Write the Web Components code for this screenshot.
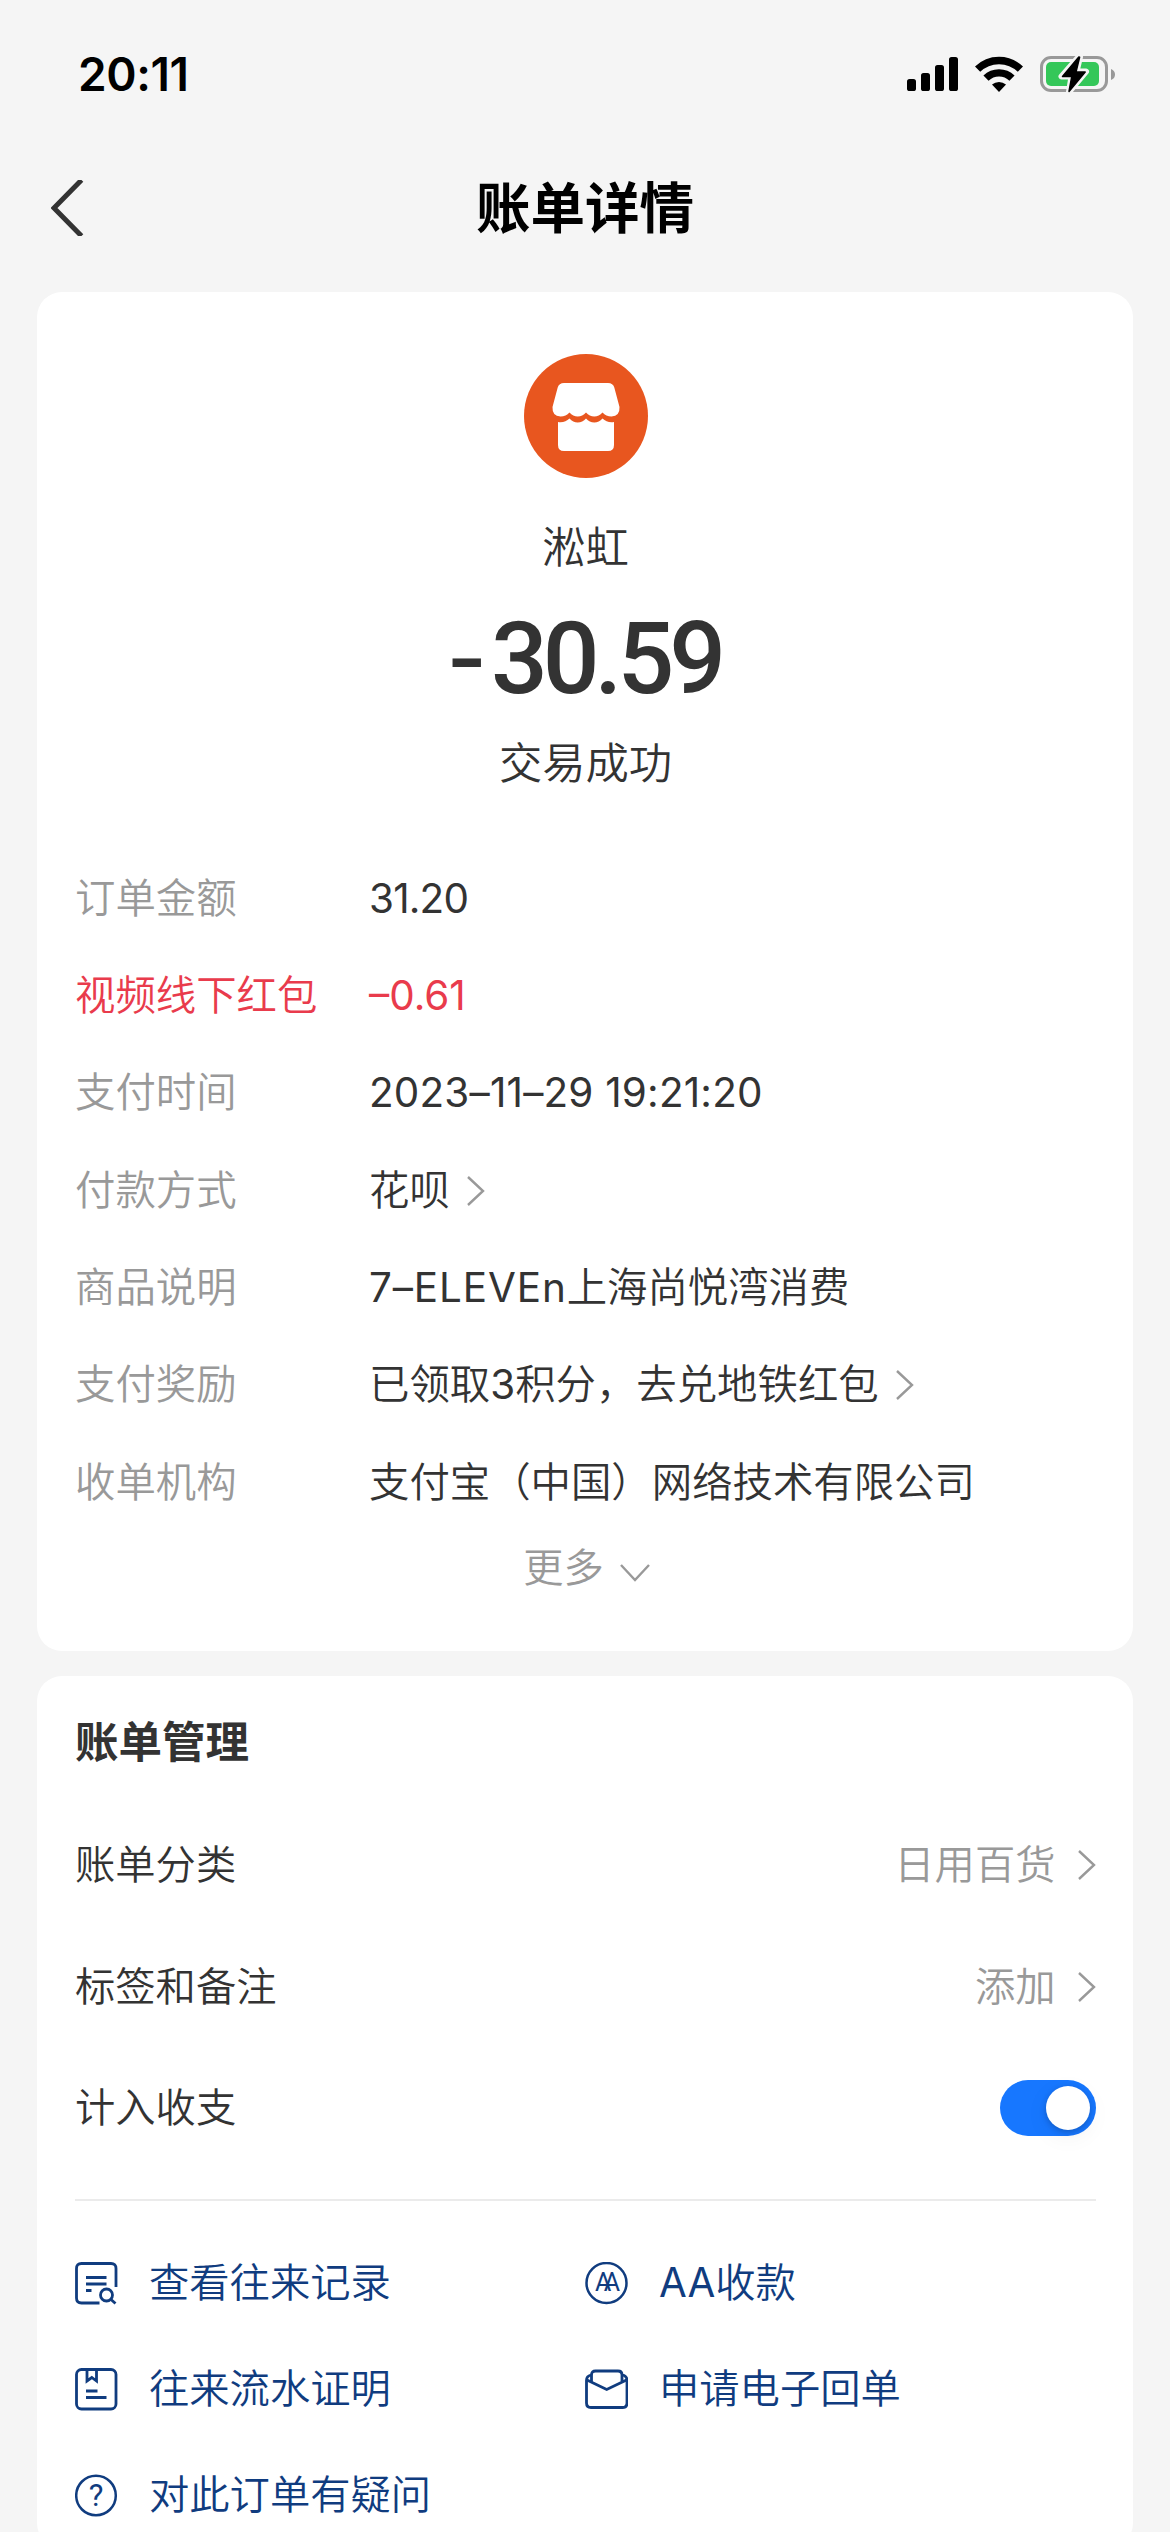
<!DOCTYPE html>
<html lang="zh-CN">
<head>
<meta charset="UTF-8">
<meta name="viewport" content="width=device-width, initial-scale=1.0">
<title>账单详情</title>
<style>
    html, body {
        margin: 0;
        height: 2532px;
        overflow: hidden;
    }

    body {
        background: #f5f5f5;
        color: #333;
        font-family: Inter, "Noto Sans CJK SC", sans-serif;
        font-size: 40.3px;
        font-weight: 350;
        line-height: 60px;
    }
</style>
</head>
<body>
    <bill-page></bill-page>

<script>
const define = (name, html) => {
    customElements.define(name, class extends HTMLElement {
        constructor() {
            super();
            this.attachShadow({ mode: 'open' });
            this.shadowRoot.innerHTML = html;
        }
    });
};

define('status-bar', `
    <style>
        :host {
            display: flex;
            align-items: center;
            justify-content: space-between;
            height: 148px;
            padding: 0 55px 0 78px;
            color: #000;
        }
        time {
            font-size: 46px;
            font-weight: 600;
            letter-spacing: -0.4px;
        }
        .icons {
            display: flex;
            align-items: center;
            gap: 17px;
        }
        svg { display: block; }
    </style>
    <time>20:11</time>
    <div class="icons">
        <svg width="51" height="36" viewBox="0 0 51 36">
            <rect x="0" y="23" width="9" height="12" rx="2.6"/>
            <rect x="14" y="17" width="9" height="18" rx="2.6"/>
            <rect x="28" y="9" width="9" height="26" rx="2.6"/>
            <rect x="42" y="1" width="9" height="34" rx="2.6"/>
        </svg>
        <svg width="48" height="36" viewBox="0 0 48 36">
            <g fill="none" stroke="#000" stroke-width="7.4">
                <path d="M2.6 13.2 A30.5 30.5 0 0 1 45.4 13.2"/>
                <path d="M11 22.2 A18.6 18.6 0 0 1 37 22.2"/>
            </g>
            <path d="M24 36 L17 28.6 A10.5 10.5 0 0 1 31 28.6 Z"/>
        </svg>
        <svg width="75" height="38" viewBox="0 0 75 38">
            <rect x="1.5" y="2.5" width="65" height="33" rx="9.5" fill="none" stroke="#999" stroke-width="3"/>
            <path d="M71 14 Q75 15.5 75 19.5 Q75 23.5 71 25 Z" fill="#999"/>
            <rect x="6" y="7" width="53" height="24" rx="5" fill="#34c759"/>
            <path d="M39 1.5 L21.5 21.5 H31.5 L29 37 L46 16.5 H36.5 L40 2 Z" stroke="#f5f5f5" stroke-width="6" stroke-linejoin="round"/>
            <path d="M38.8 2 L22.5 21.5 H31.8 L29 36.5 L45.2 17 H36 L39.6 2.3 Z" stroke="#000" stroke-width="1.5" stroke-linejoin="round"/>
        </svg>
    </div>
`);

define('nav-bar', `
    <style>
        :host {
            display: grid;
            grid-template-columns: 100px 1fr 100px;
            align-items: center;
            height: 119px;
            padding: 0 37px;
            color: #000;
        }
        svg {
            display: block;
            margin-left: 14px;
        }
        h1 {
            margin: 0;
            font-size: 54.5px;
            font-weight: 600;
            line-height: 80px;
            text-align: center;
        }
    </style>
    <svg width="34" height="56" viewBox="0 0 34 56">
        <path d="M30.5 0 L3 28 L30.5 56" fill="none" stroke="#333" stroke-width="5"/>
    </svg>
    <h1><slot></slot></h1>
`);

define('bill-card', `
    <style>
        :host {
            display: block;
            box-sizing: border-box;
            margin: 25px 37px 0;
            padding: 0 37px 0 38px;
            border-radius: 25px;
            background: #fff;
        }
    </style>
    <slot></slot>
`);

define('arrow-icon', `
    <style>
        :host { display: block; }
        :host([down]) svg { transform: rotate(90deg); }
        svg { display: block; }
    </style>
    <svg width="18" height="30" viewBox="0 0 18 30">
        <path d="M1 1 L16 15 L1 29" fill="none" stroke="#999" stroke-width="2.4"/>
    </svg>
`);

define('bill-summary', `
    <style>
        :host {
            display: flex;
            flex-direction: column;
            align-items: center;
            height: 558px;
            font-size: 43.3px;
        }
        .logo {
            display: block;
            margin-top: 62px;
        }
        .name { margin-top: 39px; }
        .amount {
            margin-top: 32px;
            font: 500 100px/100px Roboto, sans-serif;
            letter-spacing: -5px;
        }
        /* long, thin minus in front of the digits */
        .minus {
            display: inline-block;
            margin-right: 7px;
            transform: scale(1.1, 0.9);
            letter-spacing: 0;
        }
        .status { margin-top: 24px; }
    </style>
    <svg class="logo" width="124" height="124" viewBox="0 0 124 124">
        <circle cx="62" cy="62" r="62" fill="#e8561f"/>
        <path fill="#fff" d="M40 29 H84 Q89 29 90.3 33.5 L95.5 53 Q96 62 87.5 62.5 Q82 62.5 78.5 58.5 Q75 62.5 70.3 62.5 Q65.5 62.5 62 58.5 Q58.5 62.5 53.7 62.5 Q49 62.5 45.5 58.5 Q42 62.5 36.5 62.5 Q28 62 28.5 53 L33.7 33.5 Q35 29 40 29 Z"/>
        <path fill="#fff" d="M34 68 Q41 69 45.5 64.5 Q49 68.5 53.7 68.5 Q58.5 68.5 62 64.5 Q65.5 68.5 70.3 68.5 Q75 68.5 78.5 64.5 Q83 69 90 68 V91 Q90 97 84 97 H40 Q34 97 34 91 Z"/>
    </svg>
    <div class="name"><slot name="name"></slot></div>
    <div class="amount"><span class="minus">-</span><slot name="amount"></slot></div>
    <div class="status"><slot name="status"></slot></div>
`);

define('detail-row', `
    <style>
        :host {
            display: grid;
            grid-template-columns: 294px 1fr;
            align-items: center;
            height: 97.35px;
            font-size: 40.4px;
        }
        :host([red]) { --label: #e93b4c; color: #e93b4c; }
        .label { color: var(--label, #999); }
        .value {
            display: flex;
            align-items: center;
            gap: 17px;
            white-space: nowrap;
        }
        arrow-icon { display: none; }
        :host([link]) arrow-icon { display: block; }
    </style>
    <div class="label"><slot name="label"></slot></div>
    <div class="value"><span><slot></slot></span><arrow-icon></arrow-icon></div>
`);

define('more-button', `
    <style>
        :host {
            display: flex;
            align-items: flex-start;
            justify-content: center;
            gap: 22px;
            box-sizing: border-box;
            height: 120px;
            padding: 7px 4px 0 0;
            color: #999;
        }
        arrow-icon { margin-top: 20px; }
    </style>
    <div><slot></slot></div>
    <arrow-icon down></arrow-icon>
`);

define('setting-row', `
    <style>
        :host {
            display: flex;
            align-items: center;
            justify-content: space-between;
            height: 121.5px;
        }
        .right {
            display: flex;
            align-items: center;
            gap: 22.5px;
            color: #999;
        }
        arrow-icon { display: none; }
        :host([link]) arrow-icon { display: block; }
    </style>
    <slot name="label"></slot>
    <div class="right"><slot></slot><arrow-icon></arrow-icon></div>
`);

define('toggle-switch', `
    <style>
        :host {
            display: flex;
            justify-content: flex-end;
            align-items: center;
            box-sizing: border-box;
            width: 96px;
            height: 56px;
            padding: 6px;
            border-radius: 28px;
            background: #1777ff;
        }
        span {
            width: 44px;
            height: 44px;
            border-radius: 50%;
            background: #fff;
            box-shadow: 0 2px 6px rgba(0, 0, 0, 0.2), 0 6px 24px rgba(0, 0, 0, 0.06);
        }
    </style>
    <span></span>
`);

const LINK_ICONS = {
    search: `
        <path d="M41 25 V6.5 Q41 1.5 36 1.5 H6.5 Q1.5 1.5 1.5 6.5 V36 Q1.5 41 6.5 41 H24.5"/>
        <path d="M11 15.5 H31.5 M11 22 H31.5 M11 28.5 H16.5"/>
        <circle cx="31.5" cy="33" r="6"/>
        <path d="M36 37.5 L40.5 41.5"/>`,
    proof: `
        <rect x="1.5" y="1.5" width="39.5" height="39.5" rx="5"/>
        <path d="M12 2 V13 L16.8 9.5 L21.5 13 V2 M11 23 H22.5 M11 29.5 H31.5"/>`,
    help: `
        <circle cx="21" cy="21.5" r="19.8" stroke-width="2.5"/>
        <text x="21.2" y="32.3" font-size="31" text-anchor="middle">?</text>`,
    split: `
        <circle cx="21.5" cy="21" r="20" stroke-width="2.5"/>
        <text x="10" y="29" font-size="25" textLength="25">AA</text>`,
    mail: `
        <path d="M6 7 Q1.5 8 1.5 12.5 V35 Q1.5 39.5 6 39.5 H37.5 Q42 39.5 42 35 V12.5 Q42 8 37.5 7"/>
        <path d="M2 12 L21.7 21.5 L41.5 12 M6.5 14 V7 Q6.5 3 10.5 3 H33 Q37 3 37 7 V14"/>`
};

customElements.define('link-item', class extends HTMLElement {
    constructor() {
        super();
        this.attachShadow({ mode: 'open' });
    }

    connectedCallback() {
        this.shadowRoot.innerHTML = `
            <style>
                :host {
                    display: flex;
                    align-items: center;
                    gap: 31px;
                    color: #103c7f;
                    white-space: nowrap;
                }
                svg {
                    display: block;
                    fill: none;
                    stroke: currentColor;
                    stroke-width: 2.8;
                }
                text {
                    font-family: Roboto, sans-serif;
                    font-weight: 400;
                    fill: currentColor;
                    stroke: none;
                }
            </style>
            <svg width="43" height="43" viewBox="0 0 43 43">${LINK_ICONS[this.getAttribute('icon')]}</svg>
            <div><slot></slot></div>
        `;
    }
});

define('bill-page', `
    <style>
        :host { display: block; }
        h2 {
            margin: 0;
            padding: 36px 0 32px;
            font-size: 43.5px;
            font-weight: 600;
            line-height: 60px;
        }
        .links {
            display: grid;
            grid-template-columns: 510px 1fr;
            grid-auto-rows: 106.2px;
            margin-top: 30px;
            padding-top: 29px;
            border-top: 2px solid #ebebeb;
        }
        .latin { font-weight: 400; }
        .price { letter-spacing: -0.8px; }
        .time { letter-spacing: 0.2px; }
        .brand { letter-spacing: 0.9px; }
    </style>
    <status-bar></status-bar>
    <nav-bar>账单详情</nav-bar>
    <bill-card>
        <bill-summary>
            <span slot="name">淞虹</span>
            <span slot="amount">30.59</span>
            <span slot="status">交易成功</span>
        </bill-summary>
        <detail-row><span slot="label">订单金额</span><span class="latin price">31.20</span></detail-row>
        <detail-row red><span slot="label">视频线下红包</span><span class="latin">–0.61</span></detail-row>
        <detail-row><span slot="label">支付时间</span><span class="latin time">2023–11–29 19:21:20</span></detail-row>
        <detail-row link><span slot="label">付款方式</span>花呗</detail-row>
        <detail-row><span slot="label">商品说明</span><span class="latin brand">7–ELEVEn</span>上海尚悦湾消费</detail-row>
        <detail-row link><span slot="label">支付奖励</span>已领取<span class="latin">3</span>积分，去兑地铁红包</detail-row>
        <detail-row><span slot="label">收单机构</span>支付宝（中国）网络技术有限公司</detail-row>
        <more-button>更多</more-button>
    </bill-card>
    <bill-card>
        <h2>账单管理</h2>
        <setting-row link><span slot="label">账单分类</span>日用百货</setting-row>
        <setting-row link><span slot="label">标签和备注</span>添加</setting-row>
        <setting-row><span slot="label">计入收支</span><toggle-switch></toggle-switch></setting-row>
        <div class="links">
            <link-item icon="search">查看往来记录</link-item>
            <link-item icon="split"><span class="latin">AA</span>收款</link-item>
            <link-item icon="proof">往来流水证明</link-item>
            <link-item icon="mail">申请电子回单</link-item>
            <link-item icon="help">对此订单有疑问</link-item>
        </div>
    </bill-card>
`);
</script>
</body>
</html>
